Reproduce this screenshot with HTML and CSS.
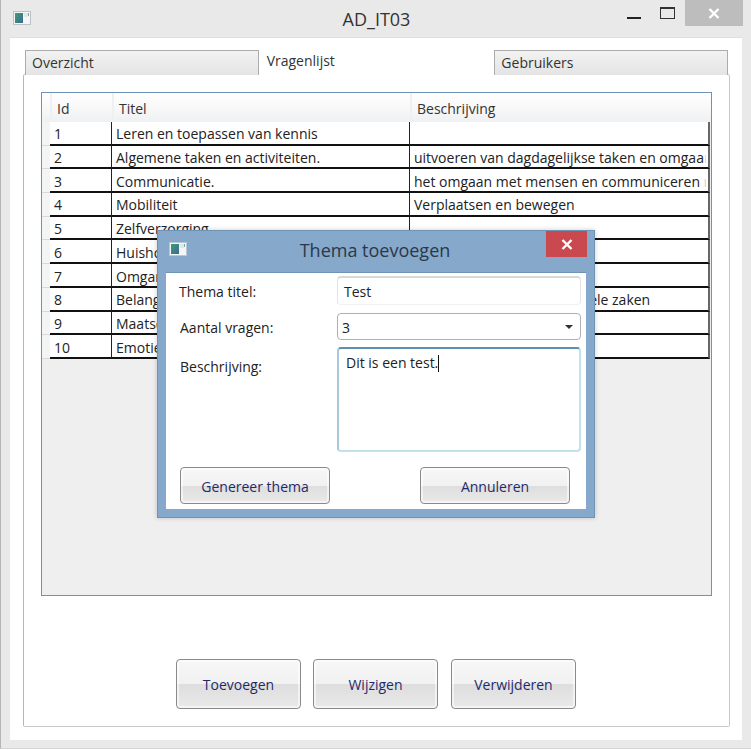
FILE: index.html
```html
<!DOCTYPE html>
<html lang="nl">
<head>
<meta charset="utf-8">
<title>AD_IT03</title>
<link rel="stylesheet" href="styles.css">
</head>
<body>
<svg class="defs" width="0" height="0"><defs><linearGradient id="teal" x1="0" y1="0" x2="1" y2="1"><stop offset="0" stop-color="#3f9a80"/><stop offset="1" stop-color="#3a6c8c"/></linearGradient></defs></svg>
<div class="window">
  <header class="titlebar">
    <svg class="app-icon" width="18" height="14" viewBox="0 0 18 14"><rect x="0.5" y="0.5" width="17" height="13" fill="#f4f6f6" stroke="#bcc2c3"/><rect x="2" y="2" width="8" height="10" fill="url(#teal)"/><rect x="11" y="2" width="4" height="4" fill="#dfe8e8"/><rect x="15" y="2" width="1" height="3" fill="#7fa8a5"/></svg>
    <div class="title">AD_IT03</div>
    <div class="win-controls">
      <span class="win-min"></span>
      <span class="win-max"></span>
      <span class="win-close"><svg width="12" height="11" viewBox="0 0 12 11"><path d="M1.5 1 10.5 10M10.5 1 1.5 10" stroke="#fff" stroke-width="2.4" fill="none"/></svg></span>
    </div>
  </header>
  <main class="client">
    <div class="tabs">
      <div class="tab">Overzicht</div>
      <div class="tab tab-active">Vragenlijst</div>
      <div class="tab">Gebruikers</div>
    </div>
    <section class="panel">
      <div class="grid">
        <div class="row row-head"><div class="rh"></div><div class="hc hc-id">Id</div><div class="hc">Titel</div><div class="hc">Beschrijving</div></div>
        <div class="row"><div class="rh"></div><div class="c">1</div><div class="c">Leren en toepassen van kennis</div><div class="c"></div></div>
        <div class="row"><div class="rh"></div><div class="c">2</div><div class="c">Algemene taken en activiteiten.</div><div class="c">uitvoeren van dagdagelijkse taken en omgaan met stress</div></div>
        <div class="row"><div class="rh"></div><div class="c">3</div><div class="c">Communicatie.</div><div class="c">het omgaan met mensen en communiceren met anderen</div></div>
        <div class="row"><div class="rh"></div><div class="c">4</div><div class="c">Mobiliteit</div><div class="c">Verplaatsen en bewegen</div></div>
        <div class="row"><div class="rh"></div><div class="c">5</div><div class="c">Zelfverzorging</div><div class="c"></div></div>
        <div class="row"><div class="rh"></div><div class="c">6</div><div class="c">Huishouden</div><div class="c"></div></div>
        <div class="row"><div class="rh"></div><div class="c">7</div><div class="c">Omgang met anderen</div><div class="c"></div></div>
        <div class="row"><div class="rh"></div><div class="c">8</div><div class="c">Belangrijke levensgebieden</div><div class="c">Het afhandelen van de enkele zaken</div></div>
        <div class="row"><div class="rh"></div><div class="c">9</div><div class="c">Maatschappelijk leven</div><div class="c"></div></div>
        <div class="row"><div class="rh"></div><div class="c">10</div><div class="c">Emoties</div><div class="c"></div></div>
      </div>
      <div class="actions">
        <button class="btn btn-lg">Toevoegen</button>
        <button class="btn btn-lg">Wijzigen</button>
        <button class="btn btn-lg">Verwijderen</button>
      </div>
    </section>
  </main>
</div>

<div class="dialog">
  <div class="dlg-bar">
    <svg class="dlg-icon" width="18" height="14" viewBox="0 0 18 14"><rect x="0.5" y="0.5" width="17" height="13" fill="#f4f6f6" stroke="#b9c6d4"/><rect x="2" y="2" width="8" height="10" fill="url(#teal)"/><rect x="11" y="2" width="4" height="4" fill="#dfe8e8"/><rect x="15" y="2" width="1" height="3" fill="#7fa8a5"/></svg>
    <div class="dlg-title">Thema toevoegen</div>
    <span class="dlg-close"><svg width="12" height="11" viewBox="0 0 12 11"><path d="M1.5 1 10.5 10M10.5 1 1.5 10" stroke="#fff" stroke-width="2.4" fill="none"/></svg></span>
  </div>
  <div class="dlg-body">
    <div class="form">
      <label class="lbl lbl-first">Thema titel:</label>
      <div class="input input-text">Test</div>
      <label class="lbl lbl-combo">Aantal vragen:</label>
      <div class="input input-combo">3<span class="caret"></span></div>
      <label class="lbl lbl-area">Beschrijving:</label>
      <div class="input input-area">Dit is een test.<span class="cursor"></span></div>
    </div>
    <div class="dlg-actions">
      <button class="btn btn-sm">Genereer thema</button>
      <button class="btn btn-sm">Annuleren</button>
    </div>
  </div>
</div>
</body>
</html>
```
FILE: styles.css
```css
* { box-sizing: border-box; }
html, body { margin: 0; padding: 0; }
body {
  width: 751px;
  height: 750px;
  overflow: hidden;
  position: relative;
  background: #fff;
  font-family: "Open Sans", "Noto Sans", sans-serif;
  font-size: 14px;
  color: #1a1a1a;
}
.defs { position: absolute; }
.window {
  width: 751px;
  height: 749px;
  background: #e9e9e9;
  border-left: 1px solid #b5b5b5;
  border-bottom: 1px solid #d4d4d4;
  display: flex;
  flex-direction: column;
}
.titlebar {
  height: 37px;
  flex: none;
  position: relative;
  display: flex;
  justify-content: center;
}
.app-icon { position: absolute; left: 12px; top: 11px; }
.title {
  font-size: 18px;
  line-height: 24px;
  padding-top: 7px;
  color: #333;
  margin-left: 1px;
}
.win-controls {
  position: absolute;
  right: 8px;
  top: 0;
  display: flex;
  align-items: flex-start;
}
.win-min { width: 14px; height: 2px; background: #222; margin-top: 17px; margin-right: 19px; }
.win-max { width: 15px; height: 12px; border: 1px solid #333; border-top-width: 2px; margin-top: 7px; margin-right: 10px; }
.win-close {
  width: 58px;
  height: 26px;
  background: #bdbdbd;
  display: flex;
  align-items: center;
  justify-content: center;
}
.client {
  flex: 1;
  background: #fff;
  margin: 0 9px 8px 9px;
  padding: 12px 13px 13px 13px;
  display: flex;
  flex-direction: column;
  border-top: 1px solid #dedede;
}
.tabs { display: flex; height: 25px; margin: 0 1px -1px 2px; position: relative; z-index: 1; }
.tab {
  flex: 1 1 0;
  height: 25px;
  padding: 2px 6px 0;
  line-height: 20px;
  background: linear-gradient(#f2f2f2, #e4e4e4);
  border: 1px solid #acacac;
  border-bottom: none;
  color: #333;
}
.tab-active {
  background: #fff;
  border: none;
  height: 26px;
  padding: 1px 8px 0;
  color: #333;
}
.panel {
  flex: 1;
  margin-right: -1px;
  border: 1px solid #c8c8c8;
  border-left-color: #b4b8bc;
  border-radius: 2px;
  padding: 17px 17px 17px 17px;
  display: flex;
  flex-direction: column;
  background: #fff;
}
.grid {
  height: 504px;
  flex: none;
  background: #efefef;
  border: 1px solid #6f93b8;
}
.row {
  display: grid;
  grid-template-columns: 8px 62px 298px 299.5px;
  height: 23.7px;
}
.row-head { height: 29px; background: linear-gradient(#fff, #f8f8f8 50%, #eef0f2); }
.rh { background: #f3f5f5; border-bottom: 1px solid #d8d8d8; }
.row-head .rh { background: transparent; border: none; }
.hc {
  padding: 6px 5px 0;
  line-height: 20px;
  border-left: 2px solid #eef0f2;
  color: #333;
}
.c {
  position: relative;
  background: #fff;
  border-bottom: 2px solid #111;
  border-right: 1.5px solid #222;
  padding: 2.4px 0 0 4px;
  line-height: 20px;
  white-space: nowrap;
  overflow: hidden;
  color: #222;
}
.c:last-child { border-right-color: #666; border-right-width: 2px; }
.c:last-child::after {
  content: "";
  position: absolute;
  right: 0;
  top: 0;
  bottom: 0;
  width: 4px;
  background: linear-gradient(90deg, rgba(255,255,255,.5), #fff 60%);
}
.actions {
  flex: 1;
  display: flex;
  justify-content: center;
  align-items: flex-end;
  gap: 12px;
  margin-left: -1px;
}
.btn {
  font: inherit;
  color: #1f2a6b;
  border: 1px solid #8a8a8a;
  border-radius: 4px;
  background: linear-gradient(#f7f7f7 0, #f1f1f1 50%, #dedede 51%, #e9e9e9 100%);
  box-shadow: inset 0 0 0 2px rgba(255,255,255,.55);
  padding: 0;
}
.btn-lg { width: 125px; height: 50px; padding-top: 1px; }
.btn-lg:last-child { margin-left: 1px; }
.btn-sm { width: 150px; height: 37px; padding-top: 2px; }

.dialog {
  position: absolute;
  left: 157px;
  top: 230px;
  width: 438px;
  height: 288px;
  background: #86a8cb;
  border: 1px solid #6f93b5;
  box-shadow: 0 0 5px rgba(0,0,0,.2);
  display: flex;
  flex-direction: column;
  padding: 0 8px 8px;
}
.dlg-bar {
  height: 41px;
  flex: none;
  position: relative;
  display: flex;
  justify-content: center;
}
.dlg-icon { position: absolute; left: 3px; top: 11px; }
.dlg-title { font-size: 18px; line-height: 24px; padding-top: 7px; color: #29384a; margin-right: 2px; }
.dlg-close {
  position: absolute;
  right: -1px;
  top: 0;
  width: 41px;
  height: 26px;
  background: #c9494e;
  display: flex;
  align-items: center;
  justify-content: center;
}
.dlg-body {
  flex: 1;
  background: #fff;
  border-top: 1px solid #6f93b5;
  padding: 3px 5px 5px 14px;
  display: flex;
  flex-direction: column;
}
.form {
  display: grid;
  grid-template-columns: 157px 244px;
  grid-template-rows: 29px 27px 105px;
  row-gap: 7.5px;
}
.lbl { line-height: 20px; color: #222; }
.lbl-first { padding-top: 6px; margin-left: -1px; }
.lbl-combo { padding-top: 5px; }
.lbl-area { padding-top: 10px; }
.input { border-radius: 4px; background: #fff; color: #222; }
.input-text {
  border: 1px solid #e4e4e4;
  border-top: 2px solid #d8d8d8;
  border-bottom-color: #eef2f5;
  padding: 4px 6px;
  line-height: 20px;
}
.input-combo {
  border: 1px solid #b0b0b0;
  padding: 4px 4px;
  line-height: 20px;
  position: relative;
}
.caret {
  position: absolute;
  right: 7px;
  top: 11px;
  border: 4px solid transparent;
  border-top: 4px solid #333;
  border-bottom: 0;
}
.input-area {
  border: 2px solid #c4e0ec;
  border-top-color: #5f8fb0;
  border-left-color: #a8cbdc;
  padding: 4px 7px 3px;
  line-height: 20px;
}
.cursor { display: inline-block; width: 1px; height: 17px; background: #111; vertical-align: -4px; }
.dlg-actions {
  display: flex;
  gap: 90px;
  margin-top: 15px;
}
```
